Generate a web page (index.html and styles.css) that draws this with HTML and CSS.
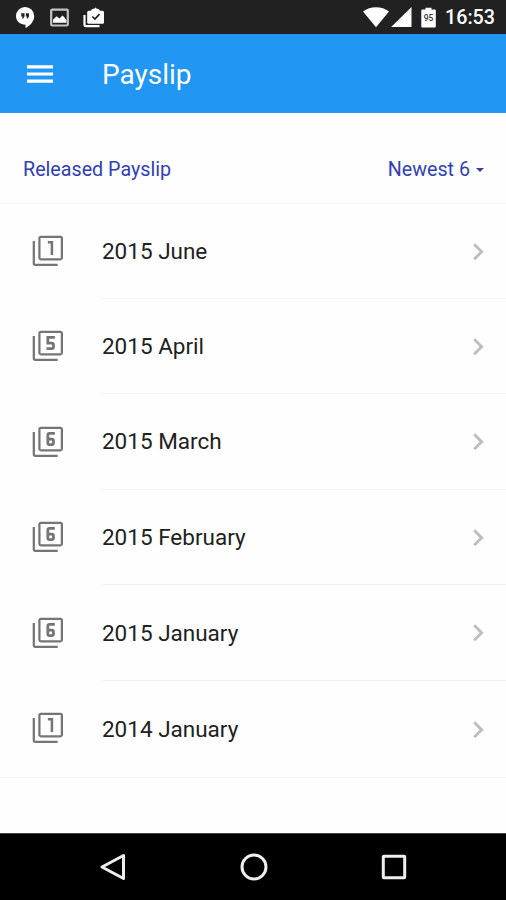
FILE: index.html
```
<!DOCTYPE html>
<html lang="en">
<head>
<meta charset="utf-8">
<title>Payslip</title>
<link rel="stylesheet" href="styles.css">
</head>
<body>
<svg class="defs" aria-hidden="true">
  <symbol id="stack" viewBox="0 0 24 24"><path d="M2.800 5H1.200v16c0 1 .8 1.800 1.800 1.800h16v-1.600H2.800V5zM21 1.200H7c-1 0-1.800.8-1.800 1.800v14c0 1 .8 1.800 1.800 1.800h14c1 0 1.800-.8 1.800-1.800V3c0-1-.8-1.800-1.800-1.800zm.2 16H6.800V2.800h14.400v14.400z"/></symbol>
  <symbol id="f1" viewBox="0 0 24 24"><use href="#stack"/><path d="M14 15h1.800V5H12v1.700h2V15z"/></symbol>
  <symbol id="f5" viewBox="0 0 24 24"><use href="#stack"/><path d="M17 13v-2c0-1.110-.9-2-2-2h-2V7h4V5h-6v6h4v2h-4v2h4c1.100 0 2-.890 2-2z"/></symbol>
  <symbol id="f6" viewBox="0 0 24 24"><use href="#stack"/><path d="M13 15h2c1.100 0 2-.890 2-2v-2c0-1.110-.9-2-2-2h-2V7h4V5h-4c-1.100 0-2 .890-2 2v6c0 1.110.9 2 2 2zm0-4h2v2h-2v-2z"/></symbol>
  <symbol id="chevron" viewBox="0 0 24 24"><path d="M8.590 16.340l4.580-4.590-4.580-4.590L10 5.750l6 6-6 6z"/></symbol>
</svg>
<div class="screen">
  <header class="status">
    <svg class="notices" viewBox="0 0 110 34">
      <path fill="#fff" d="M25 7a9 9 0 0 0-9 9c0 5 4 8.600 9.500 8.800V28c5-2.400 8.700-7 8.700-12A9.100 9.100 0 0 0 25 7z"/>
      <path fill="#212121" d="M21.300 13.200h3.200v3.200l-1.300 2.200h-1.100l.5-2.200h-1.300zM25.800 13.200H29v3.200l-1.300 2.200h-1.100l.5-2.200h-1.300z"/>
      <rect x="51.200" y="9.700" width="16.600" height="15.800" rx="1" fill="none" stroke="#c4c4c4" stroke-width="2.200"/>
      <path fill="#fff" d="M53 22.800v-3l3.600-3.600 2.800 2.300 3.200-3.100 3.800 4.400v3z"/>
      <path fill="none" stroke="#fff" stroke-width="2.200" d="M84.500 15v9.500q0 1.600 1.600 1.600H99.500"/>
      <path fill="#fff" d="M91 11.500V10l2-1.200h1.200l1.300-1.300 1.300 1.300H98l1.700 1.200v1.500z"/>
      <rect x="87.200" y="10.800" width="16.800" height="13" rx="1.500" fill="#fff"/>
      <path fill="none" stroke="#212121" stroke-width="1.700" d="M92.300 16.500l2.600 2.600 4.600-5"/>
    </svg>
    <div class="system">
      <svg class="signals" viewBox="0 0 78 34">
        <path fill="#fff" d="M2 11.500C9 5.800 21 5.800 28 11.500L15 27.200z"/>
        <path fill="#fff" d="M50.500 7v20H30.200z"/>
        <path fill="#fff" d="M64.500 7.800h6v1.600h3.300q1 0 1 1V26.500q0 1-1 1h-12.500q-1 0-1-1V10.400q0-1 1-1h3.200z"/>
        <text class="charge" x="67.600" y="20.500">95</text>
      </svg>
      <span class="clock">16:53</span>
    </div>
  </header>
  <div class="appbar">
    <svg class="menu" viewBox="0 0 28 20"><path d="M1 2.800h26M1 10h26M1 17.200h26"/></svg>
    <h1 class="title">Payslip</h1>
  </div>
  <div class="filter">
    <span class="released">Released Payslip</span>
    <span class="newest">Newest 6<i class="caret"></i></span>
  </div>
  <ul class="list">
    <li class="row"><svg class="icon"><use href="#f1"/></svg><div class="body"><span class="label">2015 June</span><svg class="chevron"><use href="#chevron"/></svg></div></li>
    <li class="row"><svg class="icon"><use href="#f5"/></svg><div class="body"><span class="label">2015 April</span><svg class="chevron"><use href="#chevron"/></svg></div></li>
    <li class="row"><svg class="icon"><use href="#f6"/></svg><div class="body"><span class="label">2015 March</span><svg class="chevron"><use href="#chevron"/></svg></div></li>
    <li class="row"><svg class="icon"><use href="#f6"/></svg><div class="body"><span class="label">2015 February</span><svg class="chevron"><use href="#chevron"/></svg></div></li>
    <li class="row"><svg class="icon"><use href="#f6"/></svg><div class="body"><span class="label">2015 January</span><svg class="chevron"><use href="#chevron"/></svg></div></li>
    <li class="row"><svg class="icon"><use href="#f1"/></svg><div class="body"><span class="label">2014 January</span><svg class="chevron"><use href="#chevron"/></svg></div></li>
  </ul>
  <nav class="nav">
    <svg viewBox="0 0 30 30"><path d="M25.500 3.500v23L4 15z"/></svg>
    <svg viewBox="0 0 30 30"><circle cx="15" cy="15" r="12"/></svg>
    <svg viewBox="0 0 30 30"><rect x="4.300" y="4.300" width="21.400" height="21.400" rx=".5"/></svg>
  </nav>
</div>
</body>
</html>
```

FILE: styles.css
```
* { box-sizing: border-box; }
body { margin: 0; background: #fefefe; font-family: Roboto, "Liberation Sans", sans-serif; }
.defs { position: absolute; width: 0; height: 0; }
.screen { display: flex; flex-direction: column; width: 506px; height: 900px; background: #fefefe; overflow: hidden; }

.status { display: flex; justify-content: space-between; height: 34px; background: #212121; border-bottom: 1px solid #1c1a22; }
.notices { width: 110px; height: 34px; }
.system { display: flex; padding-right: 11px; }
.signals { width: 78px; height: 34px; margin-right: 6px; }
.charge { font-size: 8.500px; font-weight: 500; fill: #333; text-anchor: middle; }
.clock { width: 50px; color: #fff; font-size: 19.700px; font-weight: 500; line-height: 36px; white-space: nowrap; }

.appbar { display: flex; align-items: center; height: 79px; padding-left: 26px; background: #2196f3; }
.menu { width: 28px; height: 20px; fill: none; stroke: #fff; stroke-width: 3.200; }
.title { margin: 2px 0 0 48px; color: #fff; font-size: 28px; font-weight: 400; line-height: 34px; }

.filter { display: flex; align-items: flex-start; justify-content: space-between; height: 91px; padding: 44px 22px 0 23px; border-bottom: 1px solid #f1f1f1; color: #3140b4; font-size: 19.700px; line-height: 25px; }
.newest { display: flex; align-items: center; }
.caret { margin-left: 6px; border: 4px solid transparent; border-top-color: #3140b4; border-bottom: 0; }

.list { margin: 0; padding: 0; list-style: none; border-bottom: 1px solid #f1f1f1; }
.row { display: flex; align-items: center; height: 95.600px; padding-left: 31.200px; }
.row:first-child { height: 94.600px; }
.icon { width: 33.700px; height: 33.700px; margin-bottom: 1px; fill: #757575; }
.body { display: flex; flex: 1; align-items: center; justify-content: space-between; height: 100%; margin-left: 37.100px; padding-right: 11px; border-bottom: 1px solid #f3f3f3; }
.row:last-child .body { border-bottom: 0; }
.label { color: #212121; font-size: 22.500px; line-height: 30px; }
.chevron { width: 34px; height: 34px; margin-top: 1.500px; fill: #bdbdbd; }

.nav { display: flex; align-items: center; justify-content: center; gap: 110.500px; height: 67px; margin-top: auto; padding-left: 1px; background: #000; border-top: 1px solid #444; }
.nav svg { width: 30px; height: 30px; fill: none; stroke: #eee; stroke-width: 3; stroke-linejoin: round; }
```
